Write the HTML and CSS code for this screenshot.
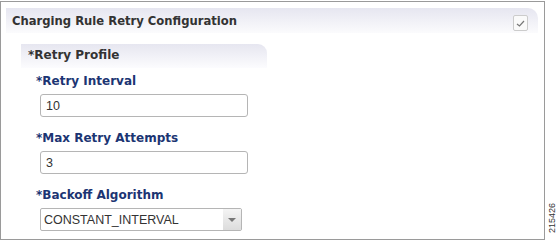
FILE: index.html
```html
<!DOCTYPE html>
<html lang="en">

<head>
    <meta charset="UTF-8">
    <title>Charging Rule Retry Configuration</title>
    <link rel="stylesheet" href="styles.css">
</head>

<body>

    <div class="panel">
        <div class="panel-head">
            <h1>Charging Rule Retry Configuration</h1>
            <span class="check">
                <svg width="9" height="7" viewBox="0 0 9 7">
                    <path d="M1 4 L3.5 6 L8 1" fill="none" stroke="#777" stroke-width="1.2" />
                </svg>
            </span>
        </div>

        <div class="group">
            <div class="group-head">*Retry Profile</div>

            <div class="field">
                <label>*Retry Interval</label>
                <input type="text" value="10">
            </div>

            <div class="field">
                <label>*Max Retry Attempts</label>
                <input type="text" value="3">
            </div>

            <div class="field">
                <label>*Backoff Algorithm</label>
                <div class="select">
                    <span>CONSTANT_INTERVAL</span>
                    <span class="arrow"></span>
                </div>
            </div>
        </div>
    </div>

    <div class="fig-id">215426</div>

</body>

</html>
```

FILE: styles.css
```css
body {
    margin: 0;
    padding: 0;
    font-family: "DejaVu Sans", Verdana, sans-serif;
    background: white;
    position: relative;
    height: 241px;
}

.panel {
    margin-top: 1px;
    width: 545px;
    height: 239px;
    border: 1px solid #9a9a9a;
    padding: 6px 0 0 5px;
    box-sizing: border-box;
}

.panel-head {
    width: 532px;
    height: 25px;
    display: flex;
    align-items: center;
    justify-content: space-between;
    background: linear-gradient(to bottom, #e6e6f0, #fbfbfd);
    border-radius: 0 10px 0 0;
    padding: 0 10px 0 6px;
    box-sizing: border-box;
}

.panel-head h1 {
    margin: 0;
    font-size: 11.6px;
    font-weight: bold;
    color: #333;
}

.check {
    width: 13px;
    height: 14px;
    border: 1px solid #ccc;
    border-radius: 2px;
    background: #fafafa;
    display: flex;
    align-items: center;
    justify-content: center;
    margin-top: 5px;
}

.group {
    margin: 11px 0 0 15px;
}

.group-head {
    width: 246px;
    height: 24px;
    box-sizing: border-box;
    padding: 4px 0 0 7px;
    margin-bottom: 6px;
    font-size: 12px;
    font-weight: bold;
    color: #333;
    background: linear-gradient(to bottom, #e6e6f0, #fcfcfe);
    border-radius: 0 9px 0 0;
}

.field {
    padding-left: 15px;
}

.field label {
    display: block;
    font-size: 12px;
    line-height: 14px;
    font-weight: bold;
    color: #1c3573;
    height: 14px;
    margin-bottom: 6px;
}

.field input {
    display: block;
    margin-left: 4px;
    width: 208px;
    height: 23px;
    box-sizing: border-box;
    border: 1px solid #b5b5b5;
    border-radius: 3px;
    padding: 0 5px;
    font-family: "Liberation Sans", Arial, sans-serif;
    font-size: 12.5px;
    color: #333;
    margin-bottom: 14px;
}

.select {
    margin-left: 4px;
    width: 202px;
    height: 23px;
    box-sizing: border-box;
    border: 1px solid #b5b5b5;
    border-radius: 2px;
    display: flex;
    align-items: center;
    justify-content: space-between;
    font-family: "Liberation Sans", Arial, sans-serif;
    font-size: 12.5px;
    color: #333;
}

.select span:first-child {
    padding-left: 3px;
}

.arrow {
    width: 18px;
    height: 21px;
    background: linear-gradient(to bottom, #f4f4f4, #dcdcdc);
    position: relative;
}

.arrow::after {
    content: "";
    position: absolute;
    left: 5px;
    top: 9px;
    border-left: 4px solid transparent;
    border-right: 4px solid transparent;
    border-top: 4px solid #777;
}

.fig-id {
    position: absolute;
    left: 534px;
    top: 213px;
    transform: rotate(-90deg);
    font-family: "Liberation Sans", Arial, sans-serif;
    font-size: 9px;
    line-height: 10px;
    color: #333;
    width: 36px;
    text-align: center;
}
```
